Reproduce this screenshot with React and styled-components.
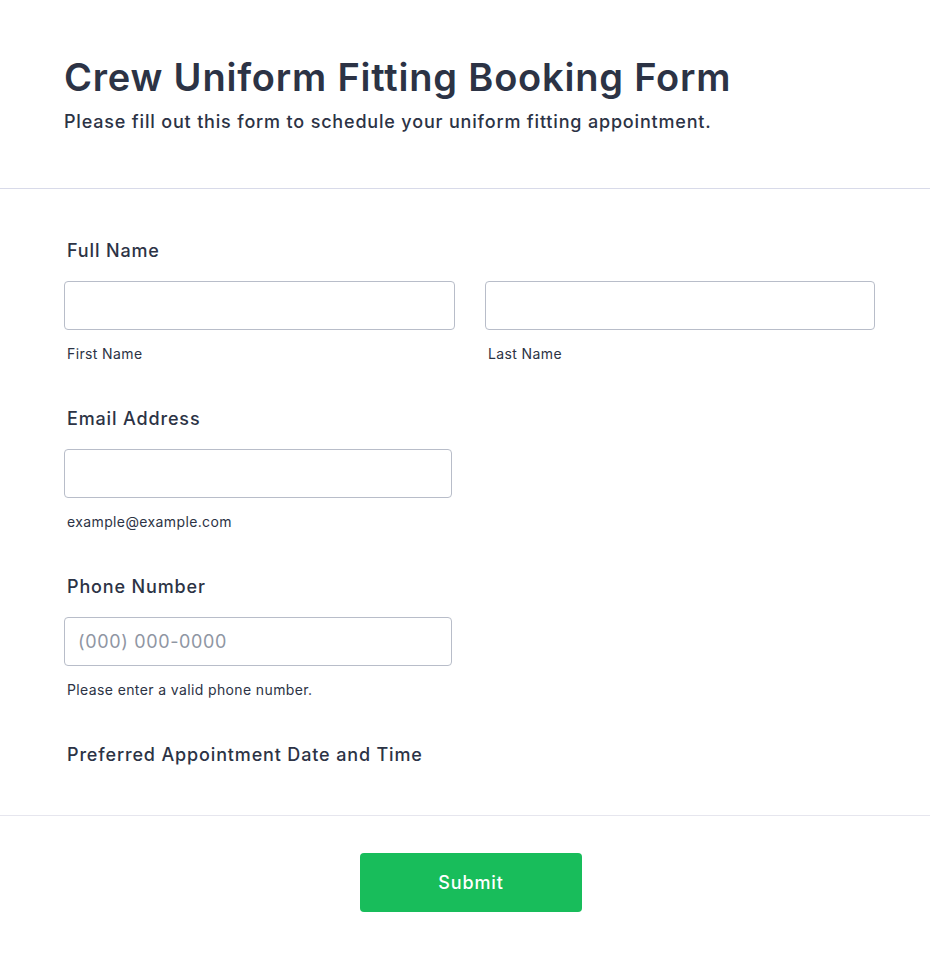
import React from 'react';
import styled, { createGlobalStyle } from 'styled-components';

const GlobalStyle = createGlobalStyle`
  body {
    margin: 0;
    background: #ffffff;
    font-family: Inter, "Noto Sans", sans-serif;
    color: #2c3345;
  }
  * { box-sizing: border-box; }
`

const Page = styled.div`
  width: 930px;
  background: #ffffff;
`

const Header = styled.header`
  padding: 53px 64px 0 64px;
  height: 189px;
  border-bottom: 1px solid #d8dae9;
`

const Title = styled.h1`
  margin: 0;
  font-size: 38px;
  line-height: 48px;
  font-weight: 600;
  letter-spacing: 0.8px;
  color: #2c3345;
`

const Subtitle = styled.p`
  margin: 9px 0 0;
  font-size: 18px;
  line-height: 24px;
  font-weight: 500;
  letter-spacing: 0.82px;
  color: #2c3345;
`

const FormBody = styled.section`
  padding: 51px 55px 49px 64px;
  display: flex;
  flex-direction: column;
  gap: 46px;
  border-bottom: 1px solid #e6e6ee;
`

const Field = styled.div`
  display: flex;
  flex-direction: column;
`

const Label = styled.label`
  margin-left: 3px;
  font-size: 18px;
  line-height: 22px;
  font-weight: 500;
  letter-spacing: 0.85px;
  color: #2c3345;
`

const Row = styled.div`
  display: grid;
  grid-template-columns: ${p => p.$cols || '388px'};
  column-gap: 30px;
  margin-top: 19px;
`

const InputWrap = styled.div`
  display: flex;
  flex-direction: column;
`

const Input = styled.input`
  width: 100%;
  height: 49px;
  border: 1px solid #b8bdc9;
  border-radius: 4px;
  padding: 0 13px;
  font-family: Inter, sans-serif;
  font-size: 18px;
  letter-spacing: 0.65px;
  color: #2c3345;
  background: #ffffff;
  outline: none;

  &::placeholder {
    color: #8f96a3;
  }
`

const SubLabel = styled.span`
  margin: 15px 0 0 3px;
  font-size: 14px;
  line-height: 17px;
  letter-spacing: 0.38px;
  color: #2c3345;
`

const Footer = styled.div`
  display: flex;
  justify-content: center;
  padding: 37px 0 50px 12px;
`

const SubmitButton = styled.button`
  width: 222px;
  height: 59px;
  border: none;
  border-radius: 4px;
  background: #18bd5b;
  color: #ffffff;
  font-family: Inter, sans-serif;
  font-size: 18px;
  font-weight: 500;
  letter-spacing: 0.9px;
  cursor: pointer;
`

const App = () => (
  <Page>
    <GlobalStyle />
    <Header>
      <Title>Crew Uniform Fitting Booking Form</Title>
      <Subtitle>Please fill out this form to schedule your uniform fitting appointment.</Subtitle>
    </Header>
    <FormBody>
      <Field>
        <Label>Full Name</Label>
        <Row $cols="391px 390px">
          <InputWrap>
            <Input type="text" />
            <SubLabel>First Name</SubLabel>
          </InputWrap>
          <InputWrap>
            <Input type="text" />
            <SubLabel>Last Name</SubLabel>
          </InputWrap>
        </Row>
      </Field>
      <Field>
        <Label>Email Address</Label>
        <Row>
          <InputWrap>
            <Input type="email" />
            <SubLabel>example@example.com</SubLabel>
          </InputWrap>
        </Row>
      </Field>
      <Field>
        <Label>Phone Number</Label>
        <Row>
          <InputWrap>
            <Input type="tel" placeholder="(000) 000-0000" />
            <SubLabel>Please enter a valid phone number.</SubLabel>
          </InputWrap>
        </Row>
      </Field>
      <Field>
        <Label>Preferred Appointment Date and Time</Label>
      </Field>
    </FormBody>
    <Footer>
      <SubmitButton type="button">Submit</SubmitButton>
    </Footer>
  </Page>
);

export default App;
